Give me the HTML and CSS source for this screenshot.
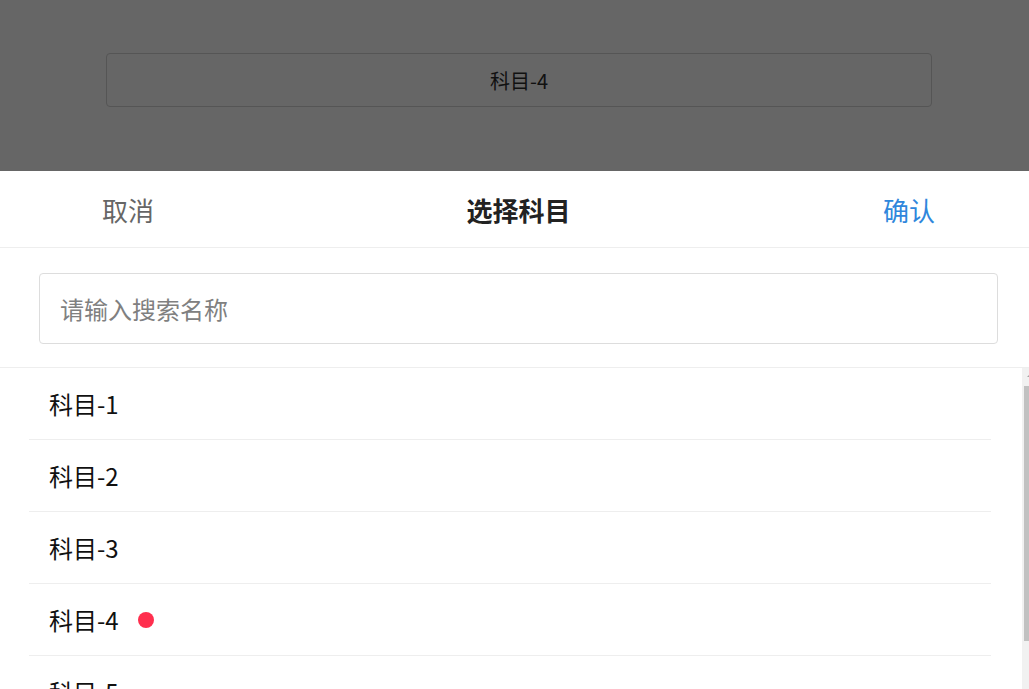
FILE: index.html
```html
<!DOCTYPE html>
<html lang="zh-CN">
<head>
  <meta charset="UTF-8" />
  <meta name="viewport" content="width=device-width, initial-scale=1.0"/>
  <title>选择科目</title>
  <link rel="stylesheet" href="styles.css">
</head>
<body>
  <div class="page">

    <!-- page behind the mask -->
    <div class="mask">
      <div class="picker-btn">科目-4</div>
    </div>

    <!-- popup -->
    <div class="popup">
      <div class="popup-header">
        <div class="action cancel">取消</div>
        <div class="title">选择科目</div>
        <div class="action confirm">确认</div>
      </div>

      <div class="search">
        <input class="search-input" type="text" placeholder="请输入搜索名称">
      </div>

      <div class="list-wrap">
        <ul class="list">
          <li class="item">科目-1</li>
          <li class="item">科目-2</li>
          <li class="item">科目-3</li>
          <li class="item">科目-4<span class="dot"></span></li>
          <li class="item">科目-5</li>
          <li class="item">科目-6</li>
          <li class="item">科目-7</li>
          <li class="item">科目-8</li>
        </ul>
        <!-- scrollbar -->
        <div class="scrollbar">
          <div class="scroll-arrow"></div>
          <div class="scroll-thumb"></div>
        </div>
      </div>
    </div>

  </div>
</body>
</html>
```

FILE: styles.css
```css
html, body {
  margin: 0;
  padding: 0;
  overflow: hidden;
  background: #fff;
}

body {
  font-family: "Noto Sans CJK SC", "Noto Sans", sans-serif;
  color: #111;
}

.page {
  width: 1037px;
}

/* mask + button behind it */
.mask {
  height: 171px;
  background: #666;
  box-sizing: border-box;
  padding-top: 53px;
}

.picker-btn {
  margin: 0 105px 0 106px;
  height: 54px;
  box-sizing: border-box;
  border: 1px solid #555;
  border-radius: 4px;
  display: flex;
  justify-content: center;
  align-items: center;
  font-size: 20px;
  color: #111;
}

/* popup */
.popup-header {
  height: 77px;
  box-sizing: border-box;
  border-bottom: 1px solid #eee;
  display: flex;
  align-items: center;
  justify-content: space-between;
}

.action {
  width: 256px;
  text-align: center;
  font-size: 26px;
}

.cancel {
  color: #666;
}

.confirm {
  color: #2f87dc;
}

.title {
  font-size: 26px;
  font-weight: bold;
  color: #222;
}

.search {
  padding: 25px 39px 23px;
}

.search-input {
  display: block;
  width: 100%;
  height: 71px;
  box-sizing: border-box;
  border: 1px solid #ddd;
  border-radius: 4px;
  padding: 0 20px;
  font-family: inherit;
  font-size: 24px;
  color: #333;
  outline: none;
}

.search-input::placeholder {
  color: #808080;
}

.list-wrap {
  display: flex;
  height: 400px;
  border-top: 1px solid #eee;
}

.list {
  flex: 1;
  list-style: none;
  margin: 0;
  padding: 0 0 0 29px;
  overflow: hidden;
}

.item {
  margin-right: 31px;
  height: 72px;
  box-sizing: border-box;
  padding-left: 20px;
  border-bottom: 1px solid #eee;
  display: flex;
  align-items: center;
  font-size: 24px;
  color: #111;
}

.dot {
  width: 16px;
  height: 16px;
  border-radius: 50%;
  background: #ff2f4e;
  margin-left: 19px;
}

.scrollbar {
  width: 15px;
  background: #f1f1f1;
  display: flex;
  flex-direction: column;
  align-items: center;
}

.scroll-arrow {
  height: 15px;
  width: 15px;
  display: flex;
  justify-content: center;
  align-items: center;
}

.scroll-arrow::before {
  content: "";
  border-left: 3px solid transparent;
  border-right: 3px solid transparent;
  border-bottom: 3px solid #a3a3a3;
}

.scroll-thumb {
  margin-top: 3px;
  width: 11px;
  height: 255px;
  background: #c1c1c1;
}
```
